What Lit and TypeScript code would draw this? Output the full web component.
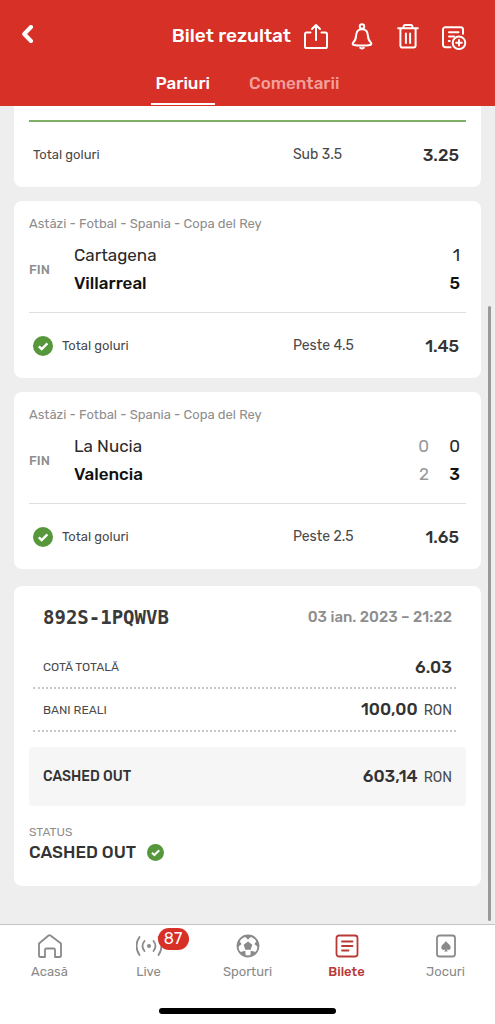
import { LitElement, html, svg, css, nothing } from "lit";
import { customElement, property } from "lit/decorators.js";
import { classMap } from "lit/directives/class-map.js";

interface Side {
  name: string;
  half?: number;
  score: number;
  winner?: boolean;
}

interface Match {
  info: string;
  sides: Side[];
  market: string;
  pick: string;
  odds: string;
}

const matches: Match[] = [
  {
    info: "Astăzi - Fotbal - Spania - Copa del Rey",
    sides: [
      { name: "Cartagena", score: 1 },
      { name: "Villarreal", score: 5, winner: true },
    ],
    market: "Total goluri",
    pick: "Peste 4.5",
    odds: "1.45",
  },
  {
    info: "Astăzi - Fotbal - Spania - Copa del Rey",
    sides: [
      { name: "La Nucia", half: 0, score: 0 },
      { name: "Valencia", half: 2, score: 3, winner: true },
    ],
    market: "Total goluri",
    pick: "Peste 2.5",
    odds: "1.65",
  },
];

const actions = [
  {
    label: "Distribuie",
    icon: svg`<path d="M8.5 10.5H4.6A1.6 1.6 0 0 0 3 12.1v12.3A1.6 1.6 0 0 0 4.6 26h18.8a1.6 1.6 0 0 0 1.6-1.6V12.1a1.6 1.6 0 0 0-1.6-1.6h-3.9M14 18V3.4M10 7l4-4 4 4"/>`,
  },
  {
    label: "Notificări",
    icon: svg`<circle cx="14" cy="4.4" r="2.2"/><path d="M14 7.2c-4 0-5.7 2.8-5.9 6.4-.2 4-1 5.2-2.9 6.8-.9.9-.7 2.2.9 2.6 3 .8 12.8.8 15.8 0 1.6-.4 1.8-1.7.9-2.6-1.9-1.6-2.7-2.8-2.9-6.8-.2-3.6-1.9-6.4-5.9-6.4z"/><path d="M12.2 25.8q1.8 1.4 3.6 0"/>`,
  },
  {
    label: "Șterge",
    icon: svg`<path d="M4.2 6.2h19.6M9.6 6V4.4A1.4 1.4 0 0 1 11 3h6a1.4 1.4 0 0 1 1.4 1.4V6M6.4 6.4v17.2a2 2 0 0 0 2 2h11.2a2 2 0 0 0 2-2V6.4M11.9 11.5V21M16.1 11.5V21"/>`,
  },
  {
    label: "Adaugă bilet",
    icon: svg`<path d="M10.5 25.2H5.4A2.4 2.4 0 0 1 3 22.8V7.6a2.4 2.4 0 0 1 2.4-2.4h15.2A2.4 2.4 0 0 1 23 7.6v4.2M9 10.2h9.5M9 14.5h5M8.8 19h1"/><circle cx="19" cy="20.8" r="6.3"/><path d="M19 18v5.6M16.2 20.8h5.6"/>`,
  },
];

const navItems = [
  {
    label: "Acasă",
    icon: svg`<path d="M2 10.5 11.6 2.5a1.5 1.5 0 0 1 1.9 0L24 10.5V22.4A1.6 1.6 0 0 1 22.4 24H18v-7a1.5 1.5 0 0 0-1.5-1.5h-7A1.5 1.5 0 0 0 8 17v7H3.6A1.6 1.6 0 0 1 2 22.4z"/>`,
  },
  {
    label: "Live",
    badge: "87",
    icon: svg`<circle class="fill" cx="13" cy="13" r="2"/><path d="M8.5 8q-4 5 0 10M17.5 8q4 5 0 10M3.5 4q-6 9 0 18M22.5 4q6 9 0 18"/>`,
  },
  {
    label: "Sporturi",
    icon: svg`<circle cx="13" cy="13" r="10.5"/><path class="fill" d="m13 8.5 4.3 3.2-1.6 5h-5.400l-1.600-5zM8.500 2.500h9L13 6.400zM22.500 7l1.500 8-4.600-4zM3.500 7 2 15l4.600-4zM4.600 19.200l6.100 4.500-.4-6zM21.400 19.200l-6.100 4.500.4-6z"/>`,
  },
  {
    label: "Bilete",
    active: true,
    icon: svg`<rect x="2.5" y="2.5" width="21" height="21" rx="2.5"/><path d="M8 8.5h10.5M8 13h10.5M8 17.5h6.5"/>`,
  },
  {
    label: "Jocuri",
    icon: svg`<rect x="4" y="2.5" width="18" height="21" rx="2.5"/><path class="fill" d="M13 8c1 1.8 4.700 3.800 4.700 6.600 0 2.300-2.500 2.900-3.900 1.700l.9 2.200h-3.400l.9-2.200c-1.400 1.200-3.900.6-3.900-1.700C8.300 11.800 12 9.800 13 8z"/>`,
  },
];

const font = css`
  "Rubik", "Roboto", "Liberation Sans", sans-serif
`;

const won = html`<svg viewBox="0 0 20 20" role="img" aria-label="Câștigat">
  <circle cx="10" cy="10" r="10" fill="#55973a" />
  <path d="m5.8 10.3 2.9 2.7 5.7-5.7" fill="none" stroke="#fff" stroke-width="2.4" />
</svg>`;

@customElement("top-bar")
export class TopBar extends LitElement {
  static styles = css`
    :host {
      display: block;
      flex: none;
      background: #d63027;
      color: #fff;
    }
    button {
      display: grid;
      place-items: center;
      padding: 0;
      border: 0;
      background: none;
      color: inherit;
      cursor: pointer;
    }
    svg {
      display: block;
      fill: none;
      stroke: currentColor;
      stroke-width: 2;
      stroke-linecap: round;
      stroke-linejoin: round;
    }
    .bar {
      display: flex;
      align-items: center;
      height: 72px;
      padding: 0 18px;
    }
    .back {
      width: 20px;
      height: 44px;
    }
    .back svg {
      stroke-width: 4;
    }
    .title {
      flex: 1;
      margin: 0;
      padding-right: 2px;
      font: 500 19px/24px ${font};
      text-align: right;
    }
    .action {
      width: 46px;
      height: 44px;
    }
    .tabs {
      display: flex;
      justify-content: center;
      gap: 29px;
      height: 34px;
    }
    .tab {
      height: 33px;
      padding: 1px 5px 0;
      border-bottom: 2px solid transparent;
      font: 500 17px/20px ${font};
      color: #f2a09b;
      align-content: start;
    }
    .on {
      color: #fff;
      border-color: #fff;
    }
  `;

  render() {
    return html`
      <div class="bar">
        <button class="back" aria-label="Înapoi">
          <svg width="20" height="22" viewBox="0 0 20 22"><path d="m13 2-6.8 7 6.8 7" /></svg>
        </button>
        <h1 class="title">Bilet rezultat</h1>
        ${actions.map(
          (a) => html`<button class="action" aria-label=${a.label}>
            <svg width="28" height="28" viewBox="0 0 28 28">${a.icon}</svg>
          </button>`
        )}
      </div>
      <div class="tabs" role="tablist">
        <button class="tab on" role="tab" aria-selected="true">Pariuri</button>
        <button class="tab" role="tab" aria-selected="false">Comentarii</button>
      </div>
    `;
  }
}

@customElement("bet-row")
export class BetRow extends LitElement {
  @property() market = "";
  @property() pick = "";
  @property() odds = "";
  @property({ type: Boolean }) won = false;

  static styles = css`
    :host {
      display: grid;
      grid-template-columns: 1fr 39%;
      align-items: center;
      height: 65px;
      padding: 0 7px 0 4px;
      font: 400 14px/20px ${font};
      color: #4a4a4a;
    }
    .market,
    .pick {
      display: flex;
      align-items: center;
      gap: 9px;
    }
    .market {
      font-size: 13px;
    }
    .pick {
      justify-content: space-between;
    }
    svg {
      width: 20px;
      height: 20px;
    }
    .odds {
      font-size: 17px;
      font-weight: 500;
      color: #333;
    }
  `;

  render() {
    return html`
      <span class="market">${this.won ? won : nothing}<span>${this.market}</span></span>
      <span class="pick"><span>${this.pick}</span><span class="odds">${this.odds}</span></span>
    `;
  }
}

@customElement("match-card")
export class MatchCard extends LitElement {
  @property({ attribute: false }) match!: Match;

  static styles = css`
    :host {
      display: block;
      padding: 13px 15px 0;
      border-radius: 8px;
      background: #fff;
      font: 400 17px/28px ${font};
      color: #2a2a2a;
    }
    .info {
      margin: 0;
      font-size: 13px;
      line-height: 20px;
      color: #8e8e8e;
    }
    .game {
      display: flex;
      align-items: center;
      height: 79px;
      padding: 0 6px 6px 0;
      box-sizing: border-box;
      border-bottom: 1px solid #dedede;
    }
    .state {
      width: 45px;
      font-size: 13px;
      font-weight: 500;
      color: #8e8e8e;
    }
    .sides {
      flex: 1;
      padding-bottom: 2px;
    }
    .side {
      display: flex;
    }
    .name {
      flex: 1;
    }
    .winner {
      font-weight: 500;
      color: #111;
    }
    .half {
      font-weight: 400;
      color: #9a9a9a;
    }
    .score {
      width: 31px;
      text-align: right;
    }
  `;

  render() {
    const m = this.match;
    return html`
      <p class="info">${m.info}</p>
      <div class="game">
        <span class="state">FIN</span>
        <div class="sides">
          ${m.sides.map(
            (s) => html`<div class=${classMap({ side: true, winner: !!s.winner })}>
              <span class="name">${s.name}</span>
              ${s.half === undefined ? nothing : html`<span class="half">${s.half}</span>`}
              <span class="score">${s.score}</span>
            </div>`
          )}
        </div>
      </div>
      <bet-row won market=${m.market} pick=${m.pick} odds=${m.odds}></bet-row>
    `;
  }
}

@customElement("ticket-card")
export class TicketCard extends LitElement {
  static styles = css`
    :host {
      display: block;
      padding: 16px 15px 24px;
      border-radius: 8px;
      background: #fff;
      font: 400 14px/20px ${font};
      color: #4a4a4a;
    }
    .head {
      display: flex;
      align-items: center;
      justify-content: space-between;
      height: 30px;
      padding: 0 14px;
    }
    .code {
      margin: 0;
      font: 700 19px/24px "DejaVu Sans Mono", monospace;
      color: #3a3a3a;
    }
    .date {
      font-size: 15px;
      font-weight: 500;
      color: #8e8e8e;
    }
    .sums {
      margin: 14px 0 0;
    }
    .line {
      display: flex;
      align-items: center;
      justify-content: space-between;
      height: 41px;
      margin: 0 10px 0 4px;
      padding: 0 4px 0 10px;
      border-bottom: 2px dotted #c8c8c8;
    }
    .name {
      font-size: 12px;
    }
    .value {
      display: flex;
      align-items: baseline;
      gap: 6px;
      margin: 0;
    }
    .amount {
      font-size: 17px;
      font-weight: 500;
      color: #333;
    }
    .total {
      display: flex;
      align-items: center;
      justify-content: space-between;
      height: 59px;
      margin-top: 15px;
      padding: 0 14px;
      border-radius: 4px;
      background: #f6f6f6;
    }
    .paid {
      font-weight: 500;
      color: #333;
    }
    .status {
      margin: 16px 0 0;
      font-size: 12px;
      color: #8e8e8e;
    }
    .result {
      display: flex;
      align-items: center;
      gap: 11px;
      margin: 0;
      font-size: 17px;
      font-weight: 500;
      color: #333;
    }
    svg {
      width: 17px;
      height: 17px;
    }
  `;

  render() {
    return html`
      <div class="head">
        <h2 class="code">892S-1PQWVB</h2>
        <span class="date">03 ian. 2023 – 21:22</span>
      </div>
      <dl class="sums">
        <div class="line">
          <dt class="name">COTĂ TOTALĂ</dt>
          <dd class="value"><span class="amount">6.03</span></dd>
        </div>
        <div class="line">
          <dt class="name">BANI REALI</dt>
          <dd class="value"><span class="amount">100,00</span> RON</dd>
        </div>
        <div class="total">
          <dt class="paid">CASHED OUT</dt>
          <dd class="value"><span class="amount">603,14</span> RON</dd>
        </div>
      </dl>
      <p class="status">STATUS</p>
      <p class="result">CASHED OUT ${won}</p>
    `;
  }
}

@customElement("bottom-nav")
export class BottomNav extends LitElement {
  static styles = css`
    :host {
      display: block;
      flex: none;
      border-top: 1px solid #c4c4c4;
      background: #fff;
    }
    .items {
      display: grid;
      grid-template-columns: repeat(5, 1fr);
    }
    .item {
      display: flex;
      flex-direction: column;
      align-items: center;
      gap: 4px;
      padding-top: 8px;
      font: 400 13px/18px ${font};
      color: #8a8a8a;
      text-decoration: none;
    }
    .active {
      color: #b83a36;
    }
    .active .label {
      font-weight: 500;
    }
    .icon {
      position: relative;
      height: 26px;
    }
    svg {
      display: block;
      fill: none;
      stroke: currentColor;
      stroke-width: 1.8;
      stroke-linecap: round;
      stroke-linejoin: round;
    }
    .fill {
      fill: currentColor;
      stroke: none;
    }
    .badge {
      position: absolute;
      left: 22px;
      top: -5px;
      width: 31px;
      border-radius: 11px;
      background: #d63027;
      color: #fff;
      font-size: 16px;
      line-height: 22px;
      text-align: center;
    }
    .home {
      width: 177px;
      height: 6px;
      margin: 27px auto 10px;
      border-radius: 3px;
      background: #000;
    }
  `;

  render() {
    return html`
      <nav class="items">
        ${navItems.map(
          (n) => html`<a
            class=${classMap({ item: true, active: !!n.active })}
            href="#"
            aria-current=${n.active ? "page" : nothing}
          >
            <span class="icon">
              <svg width="26" height="26" viewBox="0 0 26 26">${n.icon}</svg>
              ${n.badge ? html`<span class="badge">${n.badge}</span>` : nothing}
            </span>
            <span class="label">${n.label}</span>
          </a>`
        )}
      </nav>
      <div class="home"></div>
    `;
  }
}

@customElement("app-root")
export class AppRoot extends LitElement {
  static styles = css`
    :host {
      display: flex;
      flex-direction: column;
      min-height: 100vh;
      background: #eee;
    }
    .content {
      position: relative;
      flex: 1;
      display: flex;
      flex-direction: column;
      gap: 14px;
      padding: 0 14px 37px;
    }
    .first {
      padding: 14px 15px 0;
      border-radius: 0 0 8px 8px;
      background: #fff;
    }
    .first bet-row {
      border-top: 2px solid #7fae68;
    }
    .ticket {
      margin-top: 3px;
    }
    .thumb {
      position: absolute;
      top: 200px;
      right: 4px;
      bottom: 3px;
      width: 3px;
      border-radius: 2px;
      background: #999;
    }
  `;

  render() {
    return html`
      <top-bar></top-bar>
      <main class="content">
        <section class="first">
          <bet-row market="Total goluri" pick="Sub 3.5" odds="3.25"></bet-row>
        </section>
        ${matches.map((m) => html`<match-card .match=${m}></match-card>`)}
        <ticket-card class="ticket"></ticket-card>
        <div class="thumb"></div>
      </main>
      <bottom-nav></bottom-nav>
    `;
  }
}
